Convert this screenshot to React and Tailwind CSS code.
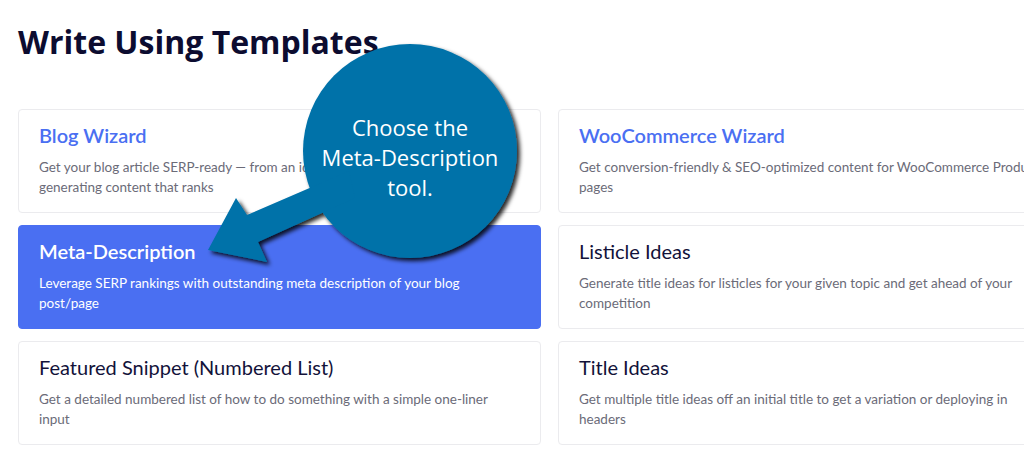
import React from "react";

const cards = [
  {
    title: "Blog Wizard",
    desc: "Get your blog article SERP-ready — from an idea to an outline and an intro to generating content that ranks",
    variant: "link",
  },
  {
    title: "WooCommerce Wizard",
    desc: "Get conversion-friendly & SEO-optimized content for WooCommerce Product pages",
    variant: "link",
  },
  {
    title: "Meta-Description",
    desc: "Leverage SERP rankings with outstanding meta description of your blog post/page",
    variant: "active",
  },
  {
    title: "Listicle Ideas",
    desc: "Generate title ideas for listicles for your given topic and get ahead of your competition",
    variant: "plain",
  },
  {
    title: "Featured Snippet (Numbered List)",
    desc: "Get a detailed numbered list of how to do something with a simple one-liner input",
    variant: "plain",
  },
  {
    title: "Title Ideas",
    desc: "Get multiple title ideas off an initial title to get a variation or deploying in headers",
    variant: "plain",
  },
];

function Card({ title, desc, variant }) {
  const active = variant === "active";
  return (
    <div
      className={
        active
          ? "h-[104px] rounded-[4px] border border-[#4a6ff2] bg-[#4a6ff2] pl-[20px] pr-[24px] pt-[11px]"
          : "h-[104px] rounded-[4px] border border-[#ebebee] bg-white pl-[20px] pr-[24px] pt-[11px]"
      }
      style={{ fontFamily: 'Lato, "Open Sans", sans-serif' }}
    >
      <div
        className={
          active
            ? "text-[20px] leading-[28px] font-semibold text-white"
            : variant === "link"
            ? "text-[20px] leading-[28px] font-semibold text-[#4a6ff2]"
            : "text-[20px] leading-[28px] font-normal text-[#12123a]"
        }
      >
        {title}
      </div>
      <div
        className={
          active
            ? "mt-[8px] text-[13.5px] leading-[20px] text-white"
            : "mt-[8px] text-[13.5px] leading-[20px] text-[#6b6b78]"
        }
      >
        {desc}
      </div>
    </div>
  );
}

export default function App() {
  return (
    <div
      className="relative w-[1024px] h-[456px] overflow-hidden bg-white"
      style={{ fontFamily: '"Open Sans", "Noto Sans", sans-serif' }}
    >
      <div className="pl-[18px] pt-[20px]">
        <h1 className="text-[32px] leading-[44px] font-bold text-[#0c0c30]">
          Write Using Templates
        </h1>
        <div className="mt-[45px] grid grid-cols-[523px_523px] gap-x-[17px] gap-y-[12px]">
          {cards.map((c) => (
            <Card key={c.title} {...c} />
          ))}
        </div>
      </div>

      <svg
        className="pointer-events-none absolute left-0 top-0"
        width="1024"
        height="456"
        viewBox="0 0 1024 456"
      >
        <defs>
          <filter id="sh" x="-20%" y="-20%" width="140%" height="140%">
            <feDropShadow dx="3" dy="3" stdDeviation="2" floodColor="#000" floodOpacity="0.85" />
          </filter>
        </defs>
        <g filter="url(#sh)" fill="#0172a9">
          <circle cx="410" cy="151" r="107" />
          <polygon points="208,250 236,198 247,215 349,171 355,198 258,242 267,262" />
        </g>
        <g
          fill="#ffffff"
          fontSize="22"
          textAnchor="middle"
          style={{ fontFamily: '"Open Sans", "Noto Sans", sans-serif' }}
        >
          <text x="410" y="136">Choose the</text>
          <text x="410" y="166">Meta-Description</text>
          <text x="410" y="196">tool.</text>
        </g>
      </svg>
    </div>
  );
}
